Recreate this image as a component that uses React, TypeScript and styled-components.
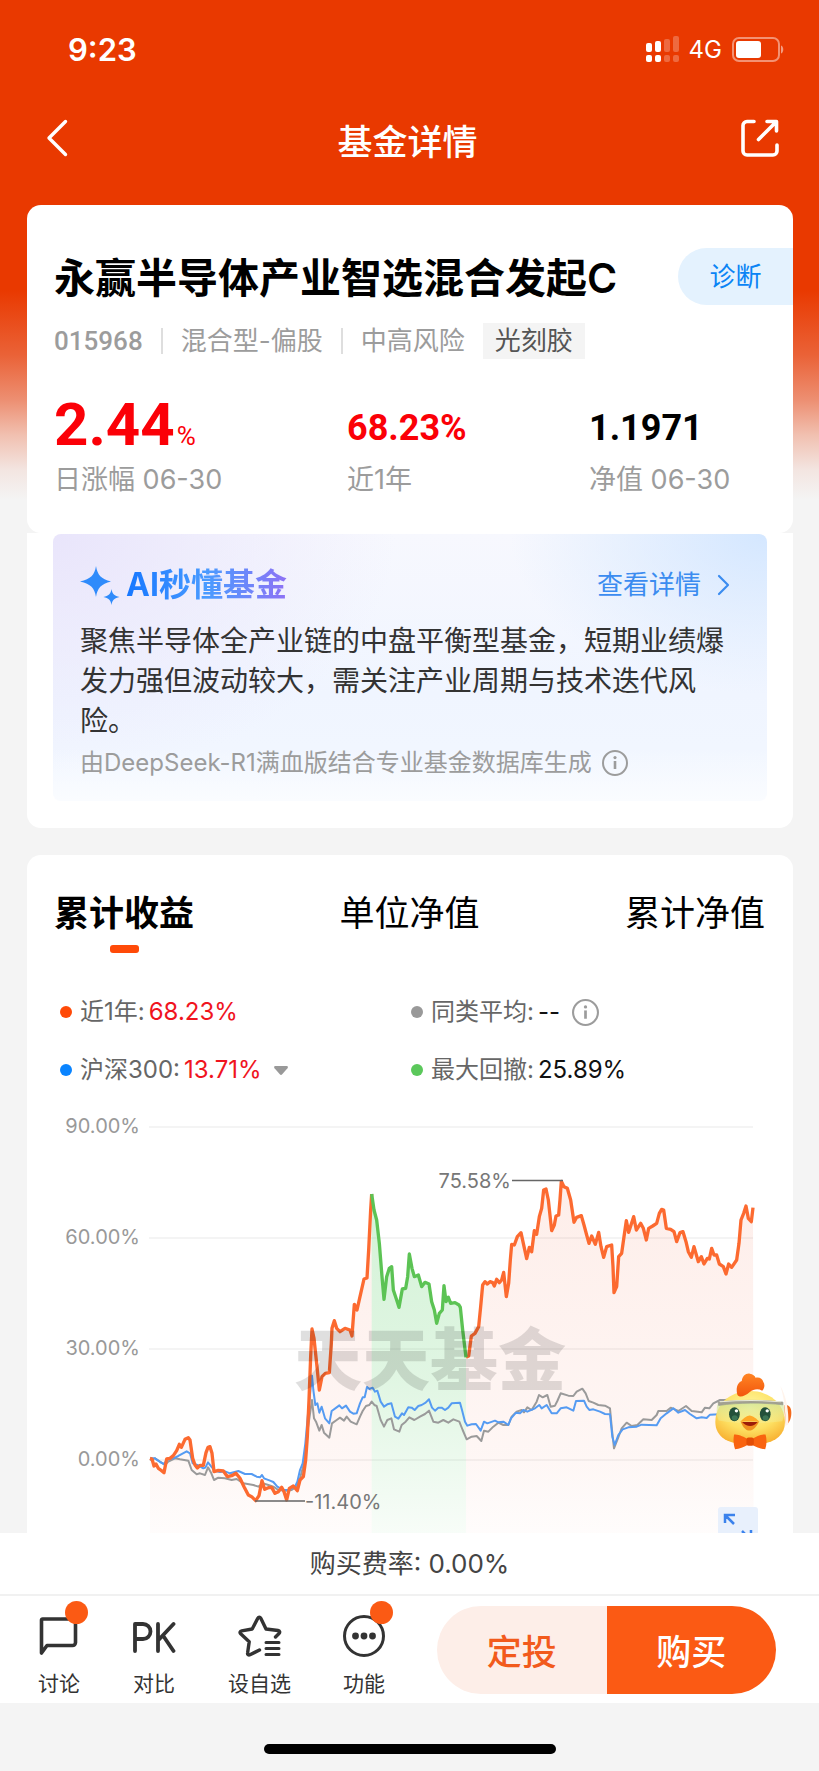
import React, { useState } from "react";
import styled, { createGlobalStyle } from "styled-components";

const GlobalStyle = createGlobalStyle`
  * { box-sizing: border-box; }
  body {
    margin: 0;
    background: #f4f4f4;
    color: #000;
    font-family: Inter, "Noto Sans CJK SC", sans-serif;
  }
  button { font: inherit; color: inherit; background: none; border: 0; padding: 0; cursor: pointer; }
  a { color: inherit; text-decoration: none; }
  h1, h2, p, dl, dd, dt { margin: 0; font-weight: 400; }
  svg { display: block; flex: none; }
`;

const Screen = styled.div`
  display: flex;
  flex-direction: column;
  height: 100vh;
`;

const Viewport = styled.div`
  position: relative;
  flex: 1;
  min-height: 0;
`;

const Scroller = styled.main`
  height: 100%;
  overflow-y: auto;
  scrollbar-width: none;
  background: linear-gradient(
      180deg,
      #e93900 0,
      #e93900 290px,
      #ea6237 355px,
      #ed8f72 400px,
      #f1c0b0 435px,
      #f3e5e1 470px,
      #f4f4f4 500px
    )
    no-repeat;
`;

const StatusBar = styled.div`
  display: flex;
  align-items: center;
  justify-content: space-between;
  height: 98px;
  padding: 0 34px 0 68px;
  color: #fff;
`;

const Clock = styled.time`
  font-size: 31px;
  font-weight: 600;
`;

const StatusIcons = styled.div`
  display: flex;
  align-items: center;
  gap: 10px;
  font-size: 24px;
`;

const NavBar = styled.header`
  display: flex;
  align-items: center;
  justify-content: space-between;
  height: 80px;
  margin-bottom: 27px;
  padding: 0 40px 0 44px;
  color: #fff;
`;

const NavTitle = styled.h1`
  font-size: 35px;
  font-weight: 500;
  line-height: 48px;
  padding-top: 8px;
`;

const Card = styled.section`
  margin: 0 26px 0 27px;
  background: #fff;
  border-radius: 14px;
`;

const SummaryCard = styled(Card)`
  padding: 43px 0 36px 27px;
`;

const InsightCard = styled(Card)`
  padding: 1px 26px 27px;
  border-radius: 0 0 14px 14px;
`;

const ChartCard = styled(Card)`
  margin-top: 27px;
  padding-top: 34px;
`;

const NameRow = styled.div`
  display: flex;
  align-items: center;
  justify-content: space-between;
  height: 57px;
`;

const FundName = styled.h2`
  padding-top: 2px;
  font-size: 41px;
  font-weight: 600;
  line-height: 56px;
  white-space: nowrap;
`;

const DiagnoseButton = styled.button`
  width: 115px;
  height: 57px;
  border-radius: 29px 0 0 29px;
  background: #e4f2fe;
  color: #0a84f5;
  font-size: 26px;
  line-height: 36px;
`;

const MetaRow = styled.div`
  display: flex;
  align-items: center;
  height: 37px;
  margin-top: 17px;
  color: #9c9c9c;
  font-size: 26px;
  line-height: 36px;
`;

const FundCode = styled.span`
  font-family: Roboto, "Noto Sans CJK SC", sans-serif;
  font-weight: 500;
`;

const Separator = styled.span`
  width: 2px;
  height: 26px;
  margin: 0 18px;
  background: #dedede;
`;

const Tag = styled.a`
  margin-left: 18px;
  padding: 0 12px;
  background: #f4f4f4;
  color: #555;
`;

const Metrics = styled.dl`
  display: grid;
  grid-template-columns: 293fr 242fr 204fr;
  margin-top: 34px;
`;

const Metric = styled.div`
  display: flex;
  flex-direction: column-reverse;
  gap: 6px;
`;

const MetricValue = styled.dd<{ $color: string; $large?: boolean }>`
  color: ${(p) => p.$color};
  font-family: Roboto, "Noto Sans CJK SC", sans-serif;
  font-size: ${(p) => (p.$large ? 60 : 36)}px;
  font-weight: 700;
  line-height: ${(p) => (p.$large ? 64 : 58)}px;
`;

const Unit = styled.span`
  padding-left: 2px;
  font-size: 26px;
  font-weight: 400;
  line-height: 30px;
`;

const MetricLabel = styled.dt`
  color: #9c9c9c;
  font-size: 27px;
  line-height: 34px;
`;

const InsightPanel = styled.div`
  padding: 26px 27px 20px;
  border-radius: 8px;
  background: linear-gradient(180deg, rgba(250, 252, 255, 0) 80%, #fafcff 100%),
    radial-gradient(ellipse 36% 60% at 100% 0, #d4e7ff 0, rgba(212, 231, 255, 0) 100%),
    radial-gradient(ellipse 48% 90% at 0 0, #e9e5fb 0, rgba(238, 234, 252, 0) 100%),
    linear-gradient(180deg, #f7f8fe 0, #f0f5ff 60%, #f2f7ff 100%);
`;

const InsightHeader = styled.div`
  display: flex;
  align-items: center;
  height: 50px;
`;

const InsightTitle = styled.h2`
  flex: 1;
  padding-left: 6px;
  font-size: 32px;
  font-weight: 700;
  line-height: 44px;

  span {
    background: linear-gradient(90deg, #1677ff, #4a9bff 50%, #8e72f5);
    background-clip: text;
    color: transparent;
  }
`;

const DetailLink = styled.a`
  display: flex;
  align-items: center;
  gap: 16px;
  padding-right: 10px;
  color: #3b8cf0;
  font-size: 26px;
  line-height: 36px;
`;

const InsightText = styled.p`
  margin-top: 11px;
  color: #333;
  font-size: 28px;
  line-height: 40px;
`;

const InsightSource = styled.p`
  display: flex;
  align-items: center;
  gap: 10px;
  margin-top: 4px;
  color: #9c9c9c;
  font-size: 24px;
  line-height: 36px;
`;

const Tabs = styled.div`
  display: flex;
  justify-content: space-between;
  padding: 0 28px 0 27px;
`;

const Tab = styled.button<{ $active: boolean }>`
  display: flex;
  flex-direction: column;
  align-items: center;
  gap: 8px;
  font-size: 35px;
  font-weight: ${(p) => (p.$active ? 700 : 400)};
  line-height: 48px;

  &::after {
    content: "";
    width: 29px;
    height: 8px;
    border-radius: 3px;
    background: ${(p) => (p.$active ? "#ff4a08" : "transparent")};
  }
`;

const Legend = styled.div`
  display: grid;
  grid-template-columns: 1fr 1fr;
  margin-top: 30px;
  padding: 0 31px 0 33px;
`;

const LegendItem = styled.div<{ $dot: string }>`
  display: flex;
  align-items: center;
  gap: 4px;
  height: 58px;
  color: #666;
  font-size: 24px;
  line-height: 34px;

  &::before {
    content: "";
    width: 12px;
    height: 12px;
    margin-right: 4px;
    border-radius: 50%;
    background: ${(p) => p.$dot};
  }

  svg { margin-left: 8px; }
`;

const LegendButton = styled.button`
  display: flex;
  align-items: center;
  gap: 4px;
`;

const LegendValue = styled.span<{ $up?: boolean }>`
  color: ${(p) => (p.$up ? "#f0141e" : "#111")};
`;

const Chart = styled.svg`
  width: 100%;
  height: auto;
  margin-top: 11px;
  font-family: Inter, "Noto Sans CJK SC", sans-serif;
`;

const Assistant = styled.button`
  position: absolute;
  right: 26px;
  bottom: 82px;
`;

const Footer = styled.footer`
  background: #fff;
`;

const FeeRate = styled.p`
  height: 63px;
  border-bottom: 2px solid #f1f1f1;
  color: #444;
  font-size: 26px;
  line-height: 62px;
  text-align: center;
`;

const ActionBar = styled.nav`
  display: flex;
  gap: 52px;
  height: 107px;
  padding: 0 43px 0 38px;
`;

const Action = styled.button`
  position: relative;
  display: flex;
  flex-direction: column;
  align-items: center;
  gap: 13px;
  padding-top: 19px;
  color: #333;
  font-size: 21px;
  line-height: 28px;
  white-space: nowrap;
`;

const Badge = styled.span`
  position: absolute;
  top: 5px;
  right: -8px;
  width: 23px;
  height: 23px;
  border-radius: 50%;
  background: #fb5a14;
`;

const TradeButtons = styled.div`
  display: flex;
  flex: 1;
  height: 88px;
  margin-top: 10px;
  border-radius: 44px;
  overflow: hidden;
`;

const TradeButton = styled.button<{ $primary?: boolean }>`
  flex: 1;
  padding-top: 3px;
  background: ${(p) => (p.$primary ? "#fb5a14" : "#fdeee8")};
  color: ${(p) => (p.$primary ? "#fff" : "#f25a1c")};
  font-size: 35px;
  font-weight: 500;
  line-height: 48px;
`;

const HomeArea = styled.div`
  display: flex;
  justify-content: center;
  height: 68px;
  padding-top: 41px;
  background: #f4f4f4;

  &::after {
    content: "";
    width: 292px;
    height: 10px;
    border-radius: 5px;
    background: #000;
  }
`;

const SignalIcon = () => (
  <svg width="33" height="26" viewBox="0 0 33 26" fill="#fff">
    <rect x="0" y="7" width="6" height="9" rx="2" />
    <rect x="9" y="5" width="6" height="11" rx="2" />
    <rect x="18" y="3" width="6" height="13" rx="2" opacity=".25" />
    <rect x="27" y="0" width="6" height="16" rx="2" opacity=".25" />
    <rect x="0" y="19" width="6" height="7" rx="2" />
    <rect x="9" y="19" width="6" height="7" rx="2" />
    <rect x="18" y="19" width="6" height="7" rx="2" opacity=".25" />
    <rect x="27" y="19" width="6" height="7" rx="2" opacity=".25" />
  </svg>
);

const BatteryIcon = () => (
  <svg width="53" height="25" viewBox="0 0 53 25">
    <rect x="1" y="1" width="46" height="23" rx="6" fill="none" stroke="#fff" strokeOpacity=".45" strokeWidth="2" />
    <rect x="4" y="4" width="25" height="17" rx="3" fill="#fff" />
    <path d="M49 8.500c3 1 3 7 0 8z" fill="#fff" opacity=".5" />
  </svg>
);

const InfoIcon = ({ size }: { size: number }) => (
  <svg width={size} height={size} viewBox="0 0 26 26" fill="none" stroke="#9c9c9c" strokeWidth="2">
    <circle cx="13" cy="13" r="12" />
    <path d="M13 11v8" strokeWidth="2.600" />
    <circle cx="13" cy="7.600" r="1.600" fill="#9c9c9c" stroke="none" />
  </svg>
);

const DiscussIcon = () => (
  <svg width="42" height="42" viewBox="0 0 42 42" fill="none" stroke="#333" strokeWidth="3.600" strokeLinejoin="round">
    <path d="M4.500 4h30a3 3 0 0 1 3 3v20.500a3 3 0 0 1-3 3H9L3.500 38V5a1 1 0 0 1 1-1z" />
  </svg>
);

const CompareIcon = () => (
  <svg width="44" height="42" viewBox="0 0 44 42" fill="none" stroke="#333" strokeWidth="3.800" strokeLinecap="round" strokeLinejoin="round">
    <path d="M3 36V9h8a7.500 7.500 0 0 1 0 15H3" />
    <path d="M26 9v27M41.500 9 26.500 25M31 20.500l10.500 15.500" />
  </svg>
);

const WatchIcon = () => (
  <svg width="44" height="42" viewBox="0 0 44 42" fill="none" stroke="#333" strokeWidth="3.400" strokeLinecap="round" strokeLinejoin="round">
    <path d="M21.500 35l-9.500 4.800c-1.500.7-2.700-.3-2.400-1.800l1.600-11.200-8.500-8c-1.200-1.200-.7-2.700 1-3l10.500-1.800L19.800 3.200c.8-1.500 2.200-1.500 3 0l5.200 10.800L40 15.500c1.700.3 2.200 1.800 1 3L37.500 22" />
    <path d="M28 27.500h13M28 33.500h13M28 39.500h13" strokeWidth="3" />
  </svg>
);

const MoreIcon = () => (
  <svg width="42" height="42" viewBox="0 0 42 42" fill="#333">
    <circle cx="21" cy="21" r="19.500" fill="none" stroke="#333" strokeWidth="3" />
    <circle cx="12.500" cy="21" r="3.400" />
    <circle cx="21" cy="21" r="3.400" />
    <circle cx="29.500" cy="21" r="3.400" />
  </svg>
);

const ChickIcon = () => (
  <svg width="79" height="79" viewBox="42 35 236 236">
    <defs>
      <radialGradient id="chickBody" cx=".5" cy=".3" r=".7">
        <stop offset="0" stopColor="#fff7a0" />
        <stop offset=".6" stopColor="#fde062" />
        <stop offset="1" stopColor="#f8b232" />
      </radialGradient>
      <linearGradient id="chickComb" x1="0" y1="0" x2="0" y2="1">
        <stop offset="0" stopColor="#ff8423" />
        <stop offset="1" stopColor="#f2560d" />
      </linearGradient>
      <linearGradient id="chickLens" x1="0" y1="0" x2="0" y2="1">
        <stop offset="0" stopColor="#c9e39c" stopOpacity=".75" />
        <stop offset="1" stopColor="#f5ef9a" stopOpacity=".4" />
      </linearGradient>
    </defs>
    <path d="M252 134c14-4 22 8 21 26s-8 32-18 32z" fill="#f26a1c" />
    <path d="M240 76c10 30 18 76 14 120l10-4c2-40-6-86-24-116z" fill="#fff4ec" />
    <path d="M150 92c64 0 104 44 104 92 0 46-40 68-104 68S46 230 46 184c0-48 40-92 104-92z" fill="url(#chickBody)" />
    <path d="M111 100c-4-18 2-34 14-38 1-14 12-24 24-22 9 1 15 6 17 12 11-3 21 2 23 12 6 8 4 20-3 27-12-7-26-5-37 4-11 10-22 14-30 13-5-1-7-4-8-8z" fill="url(#chickComb)" />
    <path d="M52 132c60-12 140-12 198 0 4 22 2 38-4 50-60 8-132 8-190-2-6-14-8-28-4-48z" fill="url(#chickLens)" />
    <path d="M54 125c60-7 136-7 194 0v8c-60-7-134-7-192 2z" fill="#a3a191" stroke="#989a8e" strokeWidth="2" />
    <path d="M60 124c60-5 126-5 182 0" fill="none" stroke="#e9ead8" strokeWidth="3" />
    <ellipse cx="103" cy="161" rx="16" ry="21" fill="#24503a" />
    <ellipse cx="195" cy="161" rx="16" ry="21" fill="#24503a" />
    <ellipse cx="104" cy="172" rx="9" ry="8" fill="#3d7555" />
    <ellipse cx="196" cy="172" rx="9" ry="8" fill="#3d7555" />
    <circle cx="109" cy="151" r="5" fill="#fff" />
    <circle cx="201" cy="151" r="5" fill="#fff" />
    <path d="M122 184c8 18 16 26 26 26s20-10 28-26z" fill="#f0901f" />
    <path d="M126 184c14 16 34 16 46 0z" fill="#9c1c08" />
    <path d="M120 184c8-9 18-18 28-19 10 1 22 10 30 19-18-2-40-2-58 0z" fill="#ffa827" />
    <path d="M102 222c14-2 30 8 40 13h14c12-6 26-16 40-13 4 14 4 28-1 44-15-1-28-8-39-13h-14c-11 6-24 12-37 13-5-14-6-30-3-44z" fill="#f9630f" />
    <rect x="139" y="231" width="22" height="24" rx="6" fill="#e34d05" />
  </svg>
);

/* Series are plotted in thirds of a pixel, measured from the left of the plot. */
const FUND_START =
  "30,1045 36,1047 42,1068 48,1062 55,1075 62,1080 72,1088 80,1047 90,1045 100,1037 110,1022 118,1003 124,1012 135,988 145,983 150,990 158,1045 165,1065 172,1074 180,1066 190,1066 198,1028 204,1012 210,1010 216,1030 222,1085 235,1081 250,1083 262,1100 275,1097 288,1090 300,1105 312,1130 325,1155 335,1160 347,1172 357,1157 366,1112 374,1138 385,1133 395,1132 405,1150 415,1145 425,1132 432,1145 440,1170 448,1135 460,1128 472,1142 480,1110 490,1100 497,1050 502,980 507,870 512,740 516,657 522,685 530,760 538,840 546,800 556,790 568,788 574,700 576,655 583,632 590,655 600,665 615,655 630,660 636,678 643,583 651,600 660,560 672,507 681,504 686,420 692,300 695,252";
const FUND_DRAWDOWN =
  "695,252 702,300 710,330 718,400 726,500 732,568 740,500 748,475 755,470 760,540 770,570 777,592 787,537 797,535 803,500 808,432 816,475 823,500 835,495 845,530 855,517 867,522 875,575 883,600 890,640 898,610 907,600 912,527 918,575 925,562 932,580 945,578 957,585 961,592 968,660 978,742";
const FUND_END =
  "978,742 986,738 994,678 1005,670 1016,650 1022,590 1028,525 1035,515 1042,522 1050,515 1058,518 1063,528 1070,508 1078,518 1085,510 1091,487 1099,560 1106,520 1111,450 1115,403 1123,405 1132,380 1143,368 1150,400 1160,446 1168,412 1175,425 1183,362 1190,373 1198,320 1205,295 1211,240 1218,237 1225,270 1235,362 1243,345 1248,318 1256,315 1260,270 1264,214 1272,230 1282,235 1292,270 1302,337 1310,322 1324,317 1332,345 1340,375 1347,400 1355,378 1366,403 1376,367 1383,410 1391,442 1400,410 1415,405 1419,470 1422,548 1430,530 1436,440 1445,430 1452,380 1459,332 1466,367 1481,320 1489,360 1502,340 1510,355 1519,390 1526,355 1538,348 1550,340 1558,310 1565,298 1571,300 1579,355 1592,358 1602,365 1610,395 1620,368 1629,365 1638,395 1645,425 1654,442 1662,410 1675,455 1684,440 1692,462 1702,445 1708,447 1715,415 1722,435 1730,435 1738,462 1750,470 1758,492 1766,462 1775,472 1790,450 1797,400 1803,330 1811,310 1818,288 1825,325 1834,335 1839,293";
const INDEX_SERIES =
  "30,1045 45,1045 60,1056 72,1062 80,1050 100,1045 115,1038 140,1024 150,1030 158,1060 172,1065 190,1075 196,1073 204,1057 214,1070 224,1082 240,1086 255,1084 270,1090 295,1083 315,1092 335,1092 350,1100 360,1102 366,1095 372,1105 390,1112 400,1116 412,1130 430,1140 445,1140 465,1130 472,1115 480,1080 488,1060 496,1000 505,900 516,797 520,840 526,885 532,880 538,908 545,890 555,925 568,940 575,903 590,892 598,886 606,895 618,887 630,905 640,911 650,910 660,880 668,862 674,862 681,831 688,837 698,833 705,845 712,842 722,875 732,890 742,883 754,880 765,920 775,926 786,910 792,915 805,892 815,893 824,900 835,888 845,885 857,878 867,868 876,893 885,902 895,893 905,893 915,900 925,893 935,880 960,878 966,900 975,935 982,947 995,943 1008,942 1022,962 1032,935 1042,940 1065,932 1075,937 1090,935 1105,945 1113,925 1128,908 1140,910 1150,900 1162,905 1185,895 1198,885 1205,895 1220,885 1235,910 1250,910 1262,895 1280,892 1300,902 1308,873 1332,872 1340,890 1348,900 1360,898 1380,905 1395,912 1410,913 1417,980 1424,1005 1435,975 1448,958 1465,952 1490,950 1505,944 1550,946 1562,925 1580,910 1600,895 1615,908 1635,900 1650,912 1670,925 1685,922 1700,924 1710,914 1750,912 1800,905 1839,900";
const PEER_SERIES =
  "30,1050 45,1045 60,1055 75,1065 85,1055 105,1045 120,1048 145,1052 155,1080 170,1093 180,1090 195,1095 204,1072 214,1090 222,1110 235,1103 255,1105 275,1110 290,1107 310,1120 340,1125 355,1130 370,1120 385,1125 400,1130 415,1140 440,1142 455,1140 470,1130 480,1105 492,1060 503,960 516,870 522,925 528,935 538,962 545,945 552,968 568,983 576,940 590,930 600,923 612,932 620,920 632,935 650,943 660,920 668,903 678,888 688,885 695,875 703,885 710,888 722,930 732,950 742,930 754,925 762,958 778,965 785,945 797,935 808,922 823,930 840,920 855,912 867,902 880,935 895,938 910,930 925,938 940,928 958,935 968,960 980,988 995,980 1010,978 1024,993 1032,962 1045,965 1060,950 1075,938 1090,945 1105,945 1115,920 1130,905 1145,900 1152,907 1162,892 1175,900 1190,875 1197,855 1208,862 1222,855 1232,890 1245,887 1252,873 1262,850 1285,857 1300,858 1310,845 1327,836 1337,850 1346,873 1360,878 1375,885 1395,887 1410,895 1416,960 1422,1015 1432,990 1445,955 1460,938 1475,948 1492,945 1510,928 1535,930 1550,915 1555,903 1580,903 1592,893 1615,903 1638,888 1655,903 1685,907 1695,893 1708,895 1720,880 1740,870 1755,870 1800,865 1839,860";

const GRID = [
  { y: 17, label: "90.00%" },
  { y: 128, label: "60.00%" },
  { y: 239, label: "30.00%" },
  { y: 350, label: "0.00%" },
];

const PerformanceChart = () => (
  <Chart viewBox="0 0 766 460" role="img" aria-label="累计收益走势">
    <defs>
      <linearGradient id="fundFill" gradientUnits="userSpaceOnUse" x1="0" y1="214" x2="0" y2="1380">
        <stop offset="0" stopColor="#f0522a" stopOpacity=".1" />
        <stop offset=".7" stopColor="#f0522a" stopOpacity=".05" />
        <stop offset="1" stopColor="#f0522a" stopOpacity="0" />
      </linearGradient>
      <linearGradient id="drawdownFill" gradientUnits="userSpaceOnUse" x1="0" y1="252" x2="0" y2="1380">
        <stop offset="0" stopColor="#4cc95a" stopOpacity=".24" />
        <stop offset=".5" stopColor="#4cc95a" stopOpacity=".17" />
        <stop offset="1" stopColor="#4cc95a" stopOpacity=".01" />
      </linearGradient>
    </defs>
    {GRID.map(({ y, label }) => (
      <g key={label}>
        <path d={`M122 ${y}H726`} stroke="#f1f1f1" strokeWidth="1.500" />
        <text x="113" y={y + 6} textAnchor="end" fontSize="20" fill="#999">
          {label}
        </text>
      </g>
    ))}
    <g transform="translate(113 0) scale(.33333)" fill="none" strokeLinejoin="round">
      <polygon points={`${FUND_START} 695,1380 30,1380`} fill="url(#fundFill)" />
      <polygon points={`${FUND_DRAWDOWN} 978,1380 695,1380`} fill="url(#drawdownFill)" />
      <polygon points={`${FUND_END} 1841,1380 978,1380`} fill="url(#fundFill)" />
      <polyline points={PEER_SERIES} stroke="#9a9a9a" strokeWidth="6" />
      <polyline points={INDEX_SERIES} stroke="#559bf2" strokeWidth="6" />
      <polyline points={FUND_START} stroke="#fc6a30" strokeWidth="10" />
      <polyline points={FUND_END} stroke="#fc6a30" strokeWidth="10" />
      <polyline points={FUND_DRAWDOWN} stroke="#5cc354" strokeWidth="10" />
    </g>
    <path d="M228 391H278M485 70.500H536" stroke="#666" strokeWidth="1.500" />
    <text x="278" y="399" fontSize="20" fill="#777">
      -11.40%
    </text>
    <text x="484" y="78" textAnchor="end" fontSize="20" fill="#777">
      75.58%
    </text>
    <text x="403" y="275" textAnchor="middle" fontSize="68" fontWeight="900" fill="#000" opacity=".12">
      天天基金
    </text>
    <rect x="691" y="397" width="40" height="40" rx="3" fill="#e8f0fc" />
    <path d="M698 413V405H708M698.500 405.500 707 414M724 420V430H714M723.500 429.500 715 421" fill="none" stroke="#3b82ec" strokeWidth="2.500" />
  </Chart>
);

const TABS = ["累计收益", "单位净值", "累计净值"];

export default function App() {
  const [tab, setTab] = useState(TABS[0]);

  return (
    <>
      <GlobalStyle />
      <Screen>
        <Viewport>
          <Scroller>
            <StatusBar>
              <Clock>9:23</Clock>
              <StatusIcons>
                <SignalIcon />
                4G
                <BatteryIcon />
              </StatusIcons>
            </StatusBar>
            <NavBar>
              <button aria-label="返回">
                <svg width="30" height="40" viewBox="0 0 30 40" fill="none" stroke="#fff" strokeWidth="3.400" strokeLinecap="round" strokeLinejoin="round">
                  <path d="M21.500 3.500 5 20l16.500 16.500" />
                </svg>
              </button>
              <NavTitle>基金详情</NavTitle>
              <button aria-label="分享">
                <svg width="38" height="38" viewBox="0 0 38 38" fill="none" stroke="#fff" strokeWidth="3.600" strokeLinecap="round" strokeLinejoin="round">
                  <path d="M13 2.500H6A4 4 0 0 0 2 6.500V32a4 4 0 0 0 4 4h26a4 4 0 0 0 4-4V26" />
                  <path d="M26 2.500h9.500V12M35 3 17.500 20.500" />
                </svg>
              </button>
            </NavBar>

            <SummaryCard>
              <NameRow>
                <FundName>永赢半导体产业智选混合发起C</FundName>
                <DiagnoseButton>诊断</DiagnoseButton>
              </NameRow>
              <MetaRow>
                <FundCode>015968</FundCode>
                <Separator />
                混合型-偏股
                <Separator />
                中高风险
                <Tag href="#">光刻胶</Tag>
              </MetaRow>
              <Metrics>
                <Metric>
                  <MetricLabel>日涨幅 06-30</MetricLabel>
                  <MetricValue $color="#fb0007" $large>
                    2.44<Unit>%</Unit>
                  </MetricValue>
                </Metric>
                <Metric>
                  <MetricLabel>近1年</MetricLabel>
                  <MetricValue $color="#fb0007">68.23%</MetricValue>
                </Metric>
                <Metric>
                  <MetricLabel>净值 06-30</MetricLabel>
                  <MetricValue $color="#000">1.1971</MetricValue>
                </Metric>
              </Metrics>
            </SummaryCard>

            <InsightCard>
              <InsightPanel>
                <InsightHeader>
                  <svg width="40" height="40" viewBox="0 0 40 40" fill="#2f8bfb">
                    <path d="M16 1c1.500 9 5 13 15 15.500C21 19 17.500 23 16 32 14.500 23 11 19 0 16.500 11 14 14.500 10 16 1z" />
                    <path d="M31.500 24c.8 5 3 7 8 8-5 1-7.200 3-8 8-.8-5-3-7-8-8 5-1 7.200-3 8-8z" />
                  </svg>
                  <InsightTitle>
                    <span>AI秒懂基金</span>
                  </InsightTitle>
                  <DetailLink href="#">
                    查看详情
                    <svg width="13" height="22" viewBox="0 0 13 22" fill="none" stroke="currentColor" strokeWidth="2.200" strokeLinecap="round" strokeLinejoin="round">
                      <path d="M2 2l9 9-9 9" />
                    </svg>
                  </DetailLink>
                </InsightHeader>
                <InsightText>
                  聚焦半导体全产业链的中盘平衡型基金，短期业绩爆发力强但波动较大，需关注产业周期与技术迭代风险。
                </InsightText>
                <InsightSource>
                  由DeepSeek-R1满血版结合专业基金数据库生成
                  <InfoIcon size={26} />
                </InsightSource>
              </InsightPanel>
            </InsightCard>

            <ChartCard>
              <Tabs role="tablist">
                {TABS.map((name) => (
                  <Tab key={name} role="tab" aria-selected={tab === name} $active={tab === name} onClick={() => setTab(name)}>
                    {name}
                  </Tab>
                ))}
              </Tabs>
              <Legend>
                <LegendItem $dot="#ff4a08">
                  近1年:<LegendValue $up>68.23%</LegendValue>
                </LegendItem>
                <LegendItem $dot="#999">
                  同类平均:<LegendValue>--</LegendValue>
                  <InfoIcon size={27} />
                </LegendItem>
                <LegendItem $dot="#0a84ff">
                  <LegendButton aria-haspopup="listbox">
                    沪深300:<LegendValue $up>13.71%</LegendValue>
                    <svg width="14" height="9" viewBox="0 0 14 9" fill="#999">
                      <path d="M1.500 0h11c1.300 0 1.800 1.200 1 2.200L8.200 8.300c-.7.800-1.700.8-2.400 0L.5 2.200C-.3 1.200.2 0 1.500 0z" />
                    </svg>
                  </LegendButton>
                </LegendItem>
                <LegendItem $dot="#5bc85b">
                  最大回撤:<LegendValue>25.89%</LegendValue>
                </LegendItem>
              </Legend>
              <PerformanceChart />
            </ChartCard>
          </Scroller>
          <Assistant aria-label="智能助手">
            <ChickIcon />
          </Assistant>
        </Viewport>

        <Footer>
          <FeeRate>购买费率: 0.00%</FeeRate>
          <ActionBar>
            <Action>
              <DiscussIcon />
              讨论
              <Badge />
            </Action>
            <Action>
              <CompareIcon />
              对比
            </Action>
            <Action>
              <WatchIcon />
              设自选
            </Action>
            <Action>
              <MoreIcon />
              功能
              <Badge />
            </Action>
            <TradeButtons>
              <TradeButton>定投</TradeButton>
              <TradeButton $primary>购买</TradeButton>
            </TradeButtons>
          </ActionBar>
          <HomeArea />
        </Footer>
      </Screen>
    </>
  );
}
